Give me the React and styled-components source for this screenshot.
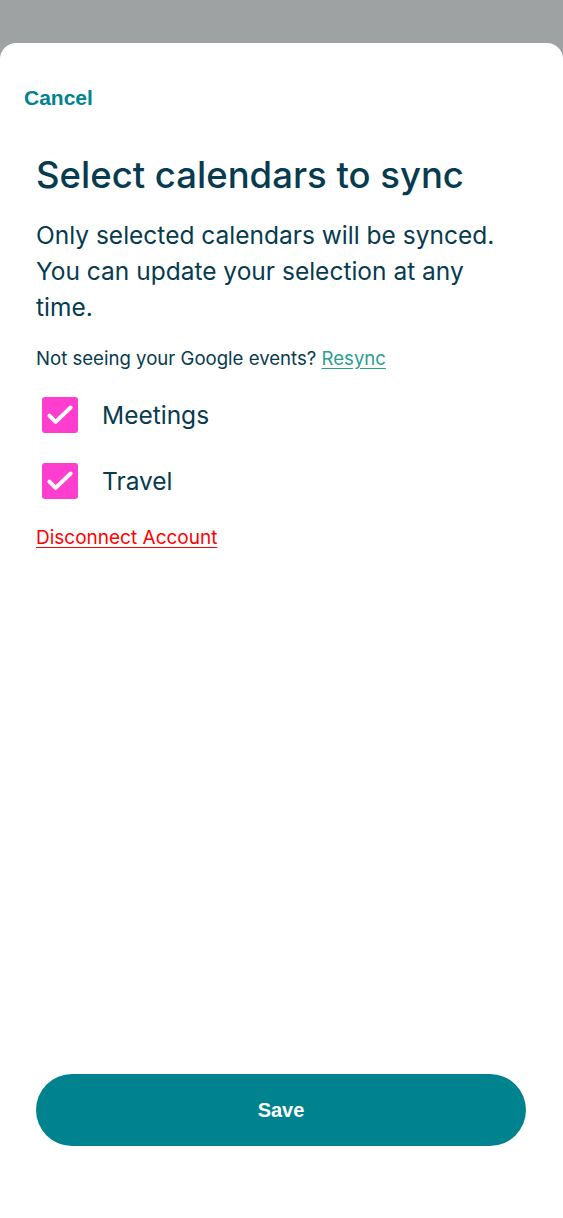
import React from "react";
import styled, { createGlobalStyle } from "styled-components";

const Global = createGlobalStyle`
  html, body { margin: 0; padding: 0; background: #9fa2a3; }
  * { box-sizing: border-box; }
`;

const Screen = styled.div`
  height: 1218px;
  display: flex;
  flex-direction: column;
  padding-top: 43px;
  background: #9fa2a3;
`;

const Sheet = styled.div`
  flex: 1;
  background: #fff;
  border-radius: 16px 16px 0 0;
  display: flex;
  flex-direction: column;
  padding: 0 37px 72px 36px;
`;

const CancelButton = styled.button`
  align-self: flex-start;
  margin: 43px 0 0 -12px;
  padding: 0;
  border: none;
  background: none;
  font-family: "Liberation Sans", Arial, sans-serif;
  font-weight: 700;
  font-size: 21px;
  color: #00838f;
  line-height: 24px;
`;

const Title = styled.h1`
  margin: 43px 0 0;
  font-family: Inter, "Noto Sans", sans-serif;
  font-weight: 500;
  font-size: 36.5px;
  line-height: 44px;
  color: #073b4f;
`;

const Lead = styled.p`
  margin: 20px 0 0;
  max-width: 475px;
  font-family: Inter, "Noto Sans", sans-serif;
  font-size: 24.5px;
  line-height: 36px;
  color: #073b4f;
`;

const Hint = styled.p`
  margin: 21px 0 0;
  font-family: Inter, "Noto Sans", sans-serif;
  font-size: 18.6px;
  line-height: 24px;
  color: #073b4f;
`;

const TextLink = styled.a`
  color: ${(p) => p.$color};
  text-decoration: underline;
  text-underline-offset: 3px;
  cursor: pointer;
`;

const List = styled.div`
  margin-top: 27px;
  display: flex;
  flex-direction: column;
  gap: 30px;
`;

const Row = styled.label`
  display: flex;
  align-items: center;
  gap: 24px;
  padding-left: 6px;
`;

const Box = styled.span`
  width: 36px;
  height: 36px;
  border-radius: 3px;
  background: #ff3dce;
  display: flex;
  align-items: center;
  justify-content: center;
`;

const Label = styled.span`
  font-family: Inter, "Noto Sans", sans-serif;
  font-size: 24.5px;
  line-height: 36px;
  color: #073b4f;
`;

const Disconnect = styled.p`
  margin: 27px 0 0;
  font-family: Inter, "Noto Sans", sans-serif;
  font-size: 19px;
  line-height: 24px;
`;

const Spacer = styled.div`
  flex: 1;
`;

const SaveButton = styled.button`
  height: 72px;
  width: 490px;
  border: none;
  border-radius: 36px;
  background: #00838f;
  color: #fff;
  font-family: "Liberation Sans", Arial, sans-serif;
  font-weight: 700;
  font-size: 20px;
`;

const Check = () => (
  <svg width="30" height="30" viewBox="0 0 24 24" fill="none" stroke="#fff" strokeWidth="3.2" strokeLinecap="round" strokeLinejoin="round">
    <path d="M3.5 12.5l5 5L20.5 6" />
  </svg>
);

const calendars = ["Meetings", "Travel"];

export default function App() {
  return (
    <>
      <Global />
      <Screen>
        <Sheet>
          <CancelButton>Cancel</CancelButton>
          <Title>Select calendars to sync</Title>
          <Lead>Only selected calendars will be synced. You can update your selection at any time.</Lead>
          <Hint>
            Not seeing your Google events? <TextLink $color="#2a9d8f">Resync</TextLink>
          </Hint>
          <List>
            {calendars.map((c) => (
              <Row key={c}>
                <Box><Check /></Box>
                <Label>{c}</Label>
              </Row>
            ))}
          </List>
          <Disconnect>
            <TextLink $color="#ff0000">Disconnect Account</TextLink>
          </Disconnect>
          <Spacer />
          <SaveButton>Save</SaveButton>
        </Sheet>
      </Screen>
    </>
  );
}
